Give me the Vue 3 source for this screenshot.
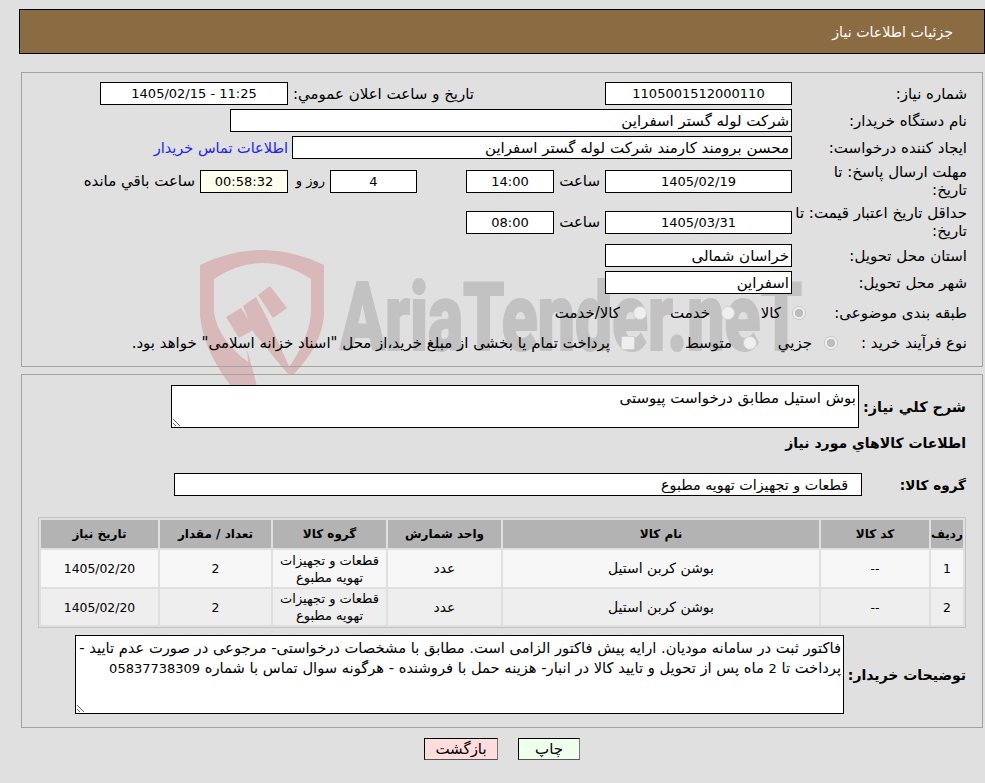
<script setup>
const rows = [
  { id: 1, code: '--', name: 'بوشن کربن استیل', unit: 'عدد', group: 'قطعات و تجهیزات تهویه مطبوع', qty: 2, date: '1405/02/20' },
  { id: 2, code: '--', name: 'بوشن کربن استیل', unit: 'عدد', group: 'قطعات و تجهیزات تهویه مطبوع', qty: 2, date: '1405/02/20' }
]
</script>

<template>
  <div class="page">
    <svg class="watermark" width="985" height="783" viewBox="0 0 985 783" aria-hidden="true">
      <path class="shield" d="M200 265Q262 235 324 265L324 315Q322 345 293 375L288 369Q311 335 311 310L311 279Q262 247 214 279L214 312Q218 340 248 362L247 349L257 386L231 386Q203 350 200 315Z" />
      <polygon class="shield" points="226,317 241,308 255,329 239,338" />
      <polygon class="shield" points="243,306 256,297 268,320 293,375 287,373 254,333" />
      <polygon class="shield" points="258,295 270,286 287,308 273,318" />
      <text class="wm-text" x="340" y="350" textLength="462" lengthAdjust="spacingAndGlyphs">AriaTender.neT</text>
    </svg>

    <header class="title-bar">جزئیات اطلاعات نیاز</header>

    <section class="panel panel-top">
      <div class="row">
        <span class="lbl">شماره نیاز:</span>
        <input class="box w187 center" readonly value="1105001512000110" />
        <span class="lbl-pub">تاریخ و ساعت اعلان عمومي:</span>
        <input class="box w188 center" readonly value="11:25 - 1405/02/15" />
      </div>
      <div class="row">
        <span class="lbl">نام دستگاه خریدار:</span>
        <input class="box w562" readonly value="شرکت لوله گستر اسفراین" />
      </div>
      <div class="row">
        <span class="lbl">ایجاد کننده درخواست:</span>
        <input class="box w500" readonly value="محسن برومند کارمند شرکت لوله گستر اسفراین" />
        <a class="contact" href="#">اطلاعات تماس خریدار</a>
      </div>
      <div class="row tall">
        <span class="lbl">مهلت ارسال پاسخ: تا<br />تاریخ:</span>
        <input class="box w187 center" readonly value="1405/02/19" />
        <span class="hour">ساعت</span>
        <input class="box w88 center" readonly value="14:00" />
        <input class="box center days" readonly value="4" />
        <span class="day-lbl">روز و</span>
        <input class="box w88 center timer" readonly value="00:58:32" />
        <span class="rest">ساعت باقي مانده</span>
      </div>
      <div class="row tall tall-2">
        <span class="lbl">حداقل تاریخ اعتبار قیمت: تا<br />تاریخ:</span>
        <input class="box w187 center" readonly value="1405/03/31" />
        <span class="hour">ساعت</span>
        <input class="box w88 center" readonly value="08:00" />
      </div>
      <div class="row">
        <span class="lbl">استان محل تحویل:</span>
        <input class="box w187" readonly value="خراسان شمالی" />
      </div>
      <div class="row">
        <span class="lbl">شهر محل تحویل:</span>
        <input class="box w187" readonly value="اسفراین" />
      </div>
      <div class="row choice-row first-choice">
        <span class="lbl lbl-a">طبقه بندی موضوعی:</span>
        <span class="radio on"></span><span class="opt o1">کالا</span>
        <span class="radio r2"></span><span class="opt o2">خدمت</span>
        <span class="radio r3"></span><span class="opt o3">کالا/خدمت</span>
      </div>
      <div class="row choice-row">
        <span class="lbl lbl-b">نوع فرآیند خرید :</span>
        <span class="radio on"></span><span class="opt o4">جزیي</span>
        <span class="radio r5"></span><span class="opt o5">متوسط</span>
        <span class="check"></span><span class="opt o6">پرداخت تمام یا بخشی از مبلغ خرید،از محل "اسناد خزانه اسلامی" خواهد بود.</span>
      </div>
    </section>

    <section class="panel panel-bottom">
      <div class="desc-row">
        <span class="lbl-bold">شرح کلي نیاز:</span>
        <textarea class="area area-desc" readonly>بوش استیل مطابق درخواست پیوستی</textarea>
      </div>
      <h2 class="section-title">اطلاعات کالاهاي مورد نیاز</h2>
      <div class="group-row">
        <span class="lbl-bold">گروه کالا:</span>
        <input class="box group-input" readonly value="قطعات و تجهیزات تهویه مطبوع" />
      </div>

      <table class="goods">
        <colgroup>
          <col class="c1" /><col class="c2" /><col class="c3" /><col class="c4" /><col class="c5" /><col class="c6" /><col class="c7" />
        </colgroup>
        <thead>
          <tr>
            <th>ردیف</th><th>کد کالا</th><th>نام کالا</th><th>واحد شمارش</th><th>گروه کالا</th><th>تعداد / مقدار</th><th>تاریخ نیاز</th>
          </tr>
        </thead>
        <tbody>
          <tr v-for="r in rows" :key="r.id">
            <td class="num">{{ r.id }}</td>
            <td class="num">{{ r.code }}</td>
            <td>{{ r.name }}</td>
            <td>{{ r.unit }}</td>
            <td class="grp">{{ r.group }}</td>
            <td class="num">{{ r.qty }}</td>
            <td class="num">{{ r.date }}</td>
          </tr>
        </tbody>
      </table>

      <div class="notes-row">
        <span class="lbl-bold">توضیحات خریدار:</span>
        <div class="area area-notes">فاکتور ثبت در سامانه مودیان. ارایه پیش فاکتور الزامی است. مطابق با مشخصات درخواستی- مرجوعی در صورت عدم تایید - پرداخت تا <span class="digits">2</span> ماه پس از تحویل و تایید کالا در انبار- هزینه حمل با فروشنده - هرگونه سوال تماس با شماره <span class="digits">05837738309</span></div>
      </div>
    </section>

    <div class="actions">
      <button class="btn print" type="button">چاپ</button>
      <button class="btn back" type="button">بازگشت</button>
    </div>
  </div>
</template>

<style>
html, body { margin: 0; background: #e0e0e0; }
</style>

<style scoped>
.page {
  position: relative;
  width: 985px;
  height: 783px;
  overflow: hidden;
  box-sizing: border-box;
  padding-top: 9px;
  background: #e0e0e0;
  color: #000;
  font: 15px/18px "DejaVu Sans", sans-serif;
  direction: rtl;
}
.watermark { position: absolute; left: 0; top: 0; }
.shield { fill: #d8b8b8; }
.wm-text { font: 900 94px Roboto, sans-serif; fill: #c2c2c2; stroke: #c2c2c2; stroke-width: 2; direction: ltr; }
.title-bar, .panel, .actions { position: relative; }

.title-bar {
  box-sizing: border-box;
  height: 45px;
  width: 966px;
  padding: 13px 31px 0 0;
  background: #8b6b41;
  border: 1px solid #000;
  color: #fff;
  font-size: 14.2px;
}
.panel {
  box-sizing: border-box;
  margin-right: 2px;
  width: 962px;
  border: 1px solid #a3a3a3;
}
.panel-top {
  height: 295px;
  margin-top: 18px;
  padding: 9px 15px 0 0;
}
.panel-bottom {
  height: 354px;
  margin-top: 7px;
  padding: 10px 16px 0 0;
}
.row {
  display: flex;
  align-items: center;
  height: 23px;
  margin-bottom: 4px;
}
.tall { height: 36px; }
.tall-2 { margin-top: 5px; }
.lbl { width: 175px; flex: none; white-space: nowrap; }
.box {
  box-sizing: border-box;
  height: 23px;
  flex: none;
  padding: 0 2px;
  border: 1px solid #000;
  border-radius: 0;
  outline: none;
  background: #fff;
  color: #000;
  font: 15px "DejaVu Sans", sans-serif;
  direction: rtl;
}
.center { text-align: center; font-size: 13px; }
.w187 { width: 187px; }
.w188 { width: 188px; }
.w562 { width: 562px; }
.w500 { width: 500px; }
.w88 { width: 88px; }
.lbl-pub { width: 181px; margin: 0 131px 0 5px; flex: none; white-space: nowrap; }
.contact { margin-right: 4px; color: #2222ee; font-size: 14.5px; text-decoration: none; white-space: nowrap; }
.hour { width: 42px; margin: 0 5px 0 4px; flex: none; white-space: nowrap; }
.days { width: 87px; margin-right: 49px; }
.day-lbl { width: 28px; margin: 0 5px 0 9px; flex: none; font-size: 13px; white-space: nowrap; }
.timer { background: #ffffee; }
.rest { margin-right: 5px; white-space: nowrap; }

.choice-row { height: 22px; margin-bottom: 8px; }
.first-choice { margin-top: 8px; }
.lbl-a { width: 161px; }
.lbl-b { width: 129px; }
.radio, .check {
  box-sizing: border-box;
  flex: none;
  width: 14px;
  height: 14px;
  background: #efefef;
  border: 1px solid #d0d0d0;
}
.radio { border-radius: 50%; }
.check { border-radius: 2px; margin-right: 50px; }
.radio.on {
  background: radial-gradient(circle, #bdbdbd 0 4px, #efefef 4.5px);
  border-color: #c8c8c8;
}
.opt { flex: none; white-space: nowrap; }
.o1 { margin-right: 11px; width: 24px; }
.r2 { margin-right: 22px; }
.o2 { margin-right: 11px; width: 40px; }
.r3 { margin-right: 23px; }
.o3 { margin-right: 13px; }
.o4 { margin-right: 12px; width: 35px; }
.r5 { margin-right: 20px; }
.o5 { margin-right: 11px; width: 47px; }
.o6 { margin-right: 11px; }

.desc-row, .group-row, .notes-row { display: flex; align-items: center; }
.lbl-bold { font-weight: 700; font-size: 14.4px; flex: none; white-space: nowrap; }
.desc-row { height: 43px; }
.desc-row .lbl-bold { width: 107px; }
.area {
  box-sizing: border-box;
  flex: none;
  padding: 2px;
  border: 1px solid #000;
  border-radius: 0;
  outline: none;
  background: #fff;
  color: #000;
  font: 15px/20px "DejaVu Sans", sans-serif;
  direction: rtl;
}
.area-desc { width: 688px; height: 43px; }
.section-title {
  margin: 0;
  height: 30px;
  line-height: 30px;
  font-size: 14px;
  font-weight: 700;
}
.group-row { height: 23px; margin-top: 15px; }
.group-row .lbl-bold { width: 104px; font-size: 13.6px; }
.group-input { width: 688px; padding-right: 13px; font-size: 14.3px; }

.goods {
  width: 928px;
  margin: 21px 0 0;
  box-sizing: border-box;
  border: 1px solid #c4c4c4;
  border-spacing: 2px;
  table-layout: fixed;
  font-size: 14px;
  line-height: 17px;
}
.goods th {
  height: 28px;
  padding: 0;
  background: #b3b3b3;
  font-size: 12px;
  font-weight: 700;
}
.goods td {
  height: 37px;
  padding: 0 5px;
  text-align: center;
  background: #f7f7f7;
}
.goods td.num { font-size: 12.4px; }
.goods td.grp { padding: 0; font-size: 13px; }
.goods tbody tr:nth-child(2) td { height: 36px; background: #eeeeee; }
.c1 { width: 32px; }
.c2 { width: 108px; }
.c3 { width: 316px; }
.c4 { width: 113px; }
.c5 { width: 113px; }
.c6 { width: 111px; }
.c7 { width: 117px; }

.notes-row { margin-top: 7px; height: 79px; }
.notes-row .lbl-bold { width: 122px; font-size: 14px; }
.area-notes {
  width: 769px;
  height: 79px;
  overflow: auto;
  resize: both;
  font-size: 14.7px;
}
.digits { font-size: 13px; }

.actions {
  display: flex;
  gap: 20px;
  margin: 10px 405px 0 0;
}
.btn {
  box-sizing: border-box;
  height: 22px;
  padding: 0;
  border: 1px solid #000;
  border-right-color: #777;
  border-bottom-color: #555;
  color: #000;
  font: 15px "DejaVu Sans", sans-serif;
}
.print { width: 62px; background: #eeffee; }
.back { width: 74px; background: #ffdddd; }
</style>
